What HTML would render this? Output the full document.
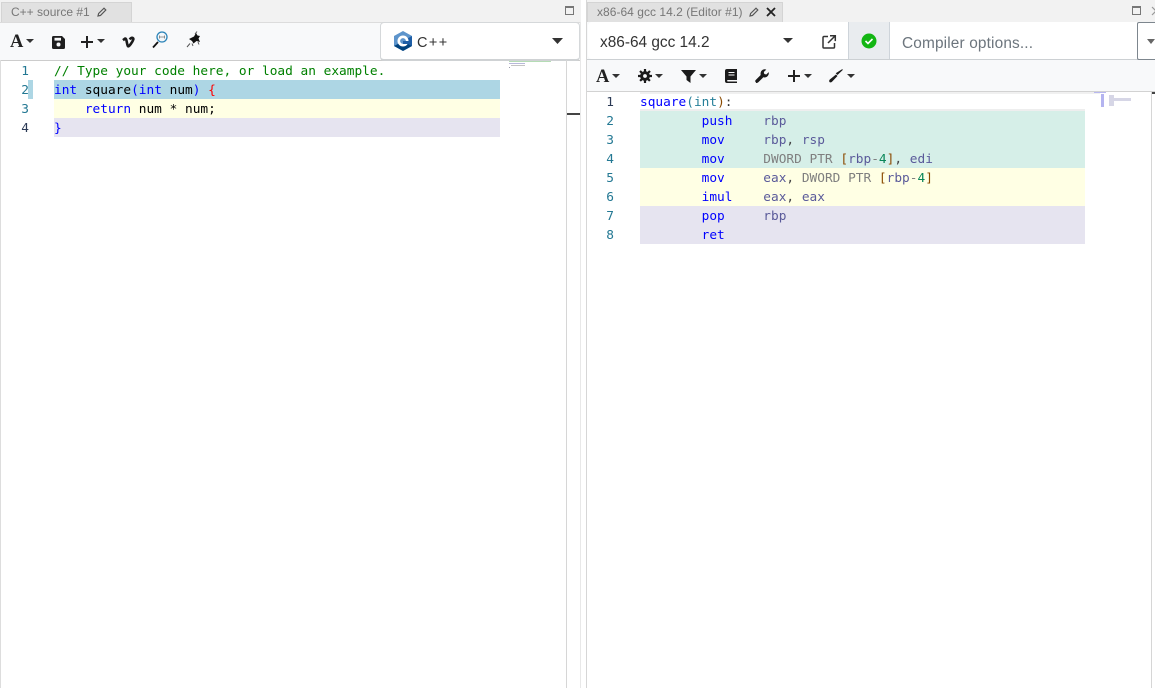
<!DOCTYPE html>
<html><head><meta charset="utf-8"><style>
html,body{margin:0;padding:0;background:#fff}
body{width:1155px;height:688px;overflow:hidden;position:relative;font-family:"Liberation Sans",sans-serif}
.a{position:absolute}
.t{position:absolute;white-space:pre;font-family:"DejaVu Sans Mono",monospace;font-size:12.8px;line-height:19px;height:19px;margin-top:1px}
.n{position:absolute;font-family:"DejaVu Sans Mono",monospace;font-size:12.8px;line-height:19px;color:#237893;text-align:right;width:20px;margin-top:1px}
.k{color:#0000ff}.c{color:#008000}.r{color:#5a5a9a}.g{color:#7f7f7f}.o{color:#098658}.y{color:#267f99}
svg{position:absolute;overflow:visible}
</style></head><body>
<!-- left pane -->
<div class="a" style="left:0;top:0;width:581px;height:22px;background:#f2f2f2"></div>
<div class="a" style="left:1px;top:2px;width:129px;height:20px;background:#e1e1e1;border:1px solid #d4d4d4;border-bottom:0;box-sizing:content-box;margin-right:0"></div>
<div class="a" style="left:11px;top:5px;font-size:12px;line-height:15px;color:#777;white-space:pre">C++ source #1</div>
<svg style="left:97px;top:7px" width="10" height="10" viewBox="0 0 10 10"><path d="M1 9l.6-2.500L7 1.200l1.800 1.800L3.500 8.400z" fill="none" stroke="#555" stroke-width="1.200"/></svg>
<svg style="left:565px;top:6px" width="9" height="9"><rect x=".5" y=".5" width="8" height="8" fill="none" stroke="#777"/><rect x="0" y="0" width="9" height="2" fill="#777"/></svg>
<div class="a" style="left:0;top:22px;width:581px;height:37px;background:#f8f9fa;border-top:1px solid #dcdcdc;border-bottom:1px solid #ccc"></div>
<div class="a" style="left:0;top:60px;width:1px;height:628px;background:#ddd"></div>
<div class="a" style="left:10px;top:31px;font:bold 18.500px 'Liberation Serif',serif;color:#222;line-height:22px">A</div>
<svg style="left:26px;top:39px" width="8" height="4"><path d="M0 0h8L4 4z" fill="#333"/></svg>
<svg style="left:52px;top:36px" width="13" height="13" viewBox="0 0 13 13"><path d="M1.500 0h8.500L13 3v8.500A1.500 1.500 0 0 1 11.500 13h-10A1.500 1.500 0 0 1 0 11.500v-10A1.500 1.500 0 0 1 1.500 0z" fill="#1f1f1f"/><rect x="2.500" y="1.800" width="6.500" height="2.800" fill="#f8f9fa"/><circle cx="6.500" cy="8.500" r="2" fill="#f8f9fa"/></svg>
<svg style="left:81px;top:36px" width="12" height="12"><path d="M5 0h2v5h5v2H7v5H5V7H0V5h5z" fill="#222"/></svg>
<svg style="left:97px;top:39px" width="8" height="4"><path d="M0 0h8L4 4z" fill="#333"/></svg>
<svg style="left:122px;top:36px" width="13" height="12" viewBox="0 0 13 12"><path d="M1 4.200L3 2.600C4.800 1.800 4.800 9 6 10.200C7 11 10.500 6 11.300 3.500C11.800 1.500 9.300 1 7.800 3.500" fill="none" stroke="#1b1b1b" stroke-width="2.600"/></svg>
<svg style="left:152px;top:31px" width="16" height="17" viewBox="0 0 16 17"><circle cx="10" cy="6" r="5" fill="#f4f8fb" stroke="#2c84b8" stroke-width="1.300"/><path d="M1 16.500l5-5.500" stroke="#111" stroke-width="1.800"/><path d="M7.500 6h5M7.500 4.500v3M12.500 4.500v3" stroke="#777" stroke-width=".8"/></svg>
<svg style="left:186px;top:31px" width="16" height="17" viewBox="0 0 16 17"><path d="M3 8l5-2.500L10 2l1.500 2.500L14 5l-1.500 2.500L14 11l-3.500-1-3 2.500-1.500-2.500z" fill="#111"/><path d="M9 3l2-2.500M1 16l3-3.500M6 12.500l1 2.500M12 11l1 2.500" stroke="#555" stroke-width="1"/></svg>
<div class="a" style="left:380px;top:22px;width:198px;height:36px;background:#fff;border:1px solid #d5d8da;border-bottom:2px solid #cfd2d4;border-radius:4px"></div>
<svg style="left:394px;top:31px" width="18" height="20" viewBox="0 0 18 20"><path d="M9 0l9 5v10l-9 5-9-5V5z" fill="#5d94cb"/><path d="M9 10l9 5-9 5-9-5 2-1z" fill="#00427e"/><path d="M18 5v10l-9-5z" fill="#1e5ea6"/><circle cx="9" cy="10" r="5.500" fill="#fff"/><circle cx="9" cy="10" r="2.900" fill="#5d94cb"/><path d="M9 10h7v3H9z" fill="#1e5ea6"/></svg>
<div class="a" style="left:417px;top:34px;font-size:14.500px;line-height:18px;color:#333;letter-spacing:1.400px">C++</div>
<svg style="left:552px;top:38px" width="11" height="6"><path d="M0 0h11L5.500 6z" fill="#333"/></svg>
<!-- left code -->
<div class="a" style="left:54px;top:80px;width:446px;height:19px;background:#add6e4"></div>
<div class="a" style="left:54px;top:99px;width:446px;height:19px;background:#ffffe4"></div>
<div class="a" style="left:54px;top:118px;width:446px;height:19px;background:#e6e4f0"></div>
<div class="a" style="left:28px;top:80px;width:5px;height:19px;background:#add6e4"></div>
<div class="n" style="left:9px;top:61px">1</div><div class="n" style="left:9px;top:80px;">2</div><div class="n" style="left:9px;top:99px">3</div><div class="n" style="left:9px;top:118px;color:#2b3a55">4</div>
<div class="t c" style="left:54px;top:61px">// Type your code here, or load an example.</div>
<div class="t" style="left:54px;top:80px;color:#000"><span class="k">int</span> square<span class="k">(</span><span class="k">int</span> num<span class="k">)</span> <span style="color:#f00">{</span></div>
<div class="t" style="left:54px;top:99px;color:#000">    <span class="k">return</span> num * num;</div>
<div class="t k" style="left:54px;top:118px">}</div>
<!-- left minimap -->
<div class="a" style="left:509px;top:61px;width:42px;height:1px;background:#b5dcb5"></div>
<div class="a" style="left:509px;top:63px;width:16px;height:1px;background:#b8b8da"></div>
<div class="a" style="left:511px;top:65px;width:14px;height:1px;background:#c4c4c4"></div>
<div class="a" style="left:509px;top:67px;width:1px;height:1px;background:#99a"></div>
<div class="a" style="left:566px;top:60px;width:1px;height:628px;background:#d6d6d6"></div>
<div class="a" style="left:567px;top:113px;width:13px;height:2px;background:#444"></div>
<div class="a" style="left:580px;top:22px;width:1px;height:666px;background:#e8e8e8"></div>
<div class="a" style="left:586px;top:0;width:1px;height:688px;background:#d6d6d6"></div>
<!-- right pane -->
<div class="a" style="left:587px;top:0;width:568px;height:22px;background:#f2f2f2"></div>
<div class="a" style="left:587px;top:2px;width:194px;height:20px;background:#e1e1e1;border:1px solid #d4d4d4;border-bottom:0"></div>
<div class="a" style="left:597px;top:5px;font-size:12px;line-height:15px;color:#777;white-space:pre;letter-spacing:.03px">x86-64 gcc 14.2 (Editor #1)</div>
<svg style="left:749px;top:7px" width="10" height="10" viewBox="0 0 10 10"><path d="M1 9l.6-2.500L7 1.200l1.800 1.800L3.500 8.400z" fill="none" stroke="#555" stroke-width="1.200"/></svg>
<svg style="left:766px;top:7px" width="10" height="10"><path d="M1 1l8 8M9 1L1 9" stroke="#222" stroke-width="1.800"/></svg>
<svg style="left:1132px;top:6px" width="9" height="9"><rect x=".5" y=".5" width="8" height="8" fill="none" stroke="#777"/><rect width="9" height="2" fill="#777"/></svg>
<div class="a" style="left:1151px;top:6px;width:4px;height:10px;overflow:hidden"><svg style="left:0;top:0" width="10" height="10"><path d="M1 1l8 8M9 1L1 9" stroke="#999" stroke-width="1.200"/></svg></div>
<div class="a" style="left:587px;top:22px;width:568px;height:37px;background:#f8f9fa;border-bottom:1px solid #ccd0d3"></div>
<div class="a" style="left:588px;top:22px;width:260px;height:37px;background:#fff;border-radius:4px 0 0 4px"></div>
<div class="a" style="left:600px;top:33px;font-size:15.400px;line-height:19px;color:#333;white-space:pre">x86-64 gcc 14.2</div>
<svg style="left:783px;top:38px" width="10" height="5"><path d="M0 0h10L5 5z" fill="#333"/></svg>
<svg style="left:822px;top:35px" width="14" height="14" viewBox="0 0 14 14"><path d="M6 1.500H2A1 1 0 0 0 1 2.500v9.500a1 1 0 0 0 1 1h9.500a1 1 0 0 0 1-1V8" fill="none" stroke="#333" stroke-width="1.500"/><path d="M8 .8h5.300v5.300M13 1L6 8" fill="none" stroke="#333" stroke-width="1.500"/></svg>
<div class="a" style="left:848px;top:22px;width:41px;height:37px;background:#e9ecef;border-left:1px solid #ced4da"></div>
<svg style="left:861px;top:33px" width="16" height="16"><circle cx="8" cy="8" r="7.500" fill="#13b613"/><path d="M4.500 8l2.500 2.500L11.500 6" fill="none" stroke="#fff" stroke-width="1.600"/></svg>
<div class="a" style="left:889px;top:22px;width:248px;height:37px;background:#fff;border-left:1px solid #ced4da"></div>
<div class="a" style="left:902px;top:34px;font-size:15.400px;line-height:19px;color:#6c757d;white-space:pre;letter-spacing:.15px">Compiler options...</div>
<div class="a" style="left:1137px;top:22px;width:18px;height:36px;background:#fff;border:1px solid #7d868e;border-right:0;border-radius:2px 0 0 2px"></div>
<svg style="left:1147px;top:39px" width="8" height="5"><path d="M0 0h8L4 5z" fill="#666"/></svg>
<div class="a" style="left:587px;top:60px;width:568px;height:31px;background:#f8f9fa;border-bottom:1px solid #d2d2d2"></div>
<div class="a" style="left:596px;top:66px;font:bold 18.500px 'Liberation Serif',serif;color:#222;line-height:22px">A</div>
<svg style="left:612px;top:74px" width="8" height="4"><path d="M0 0h8L4 4z" fill="#333"/></svg>
<svg style="left:638px;top:69px" width="14" height="14" viewBox="0 0 14 14"><circle cx="7" cy="7" r="3.400" fill="none" stroke="#1b1b1b" stroke-width="3"/><path d="M7 0v14M0 7h14M2 2l10 10M12 2L2 12" stroke="#1b1b1b" stroke-width="2.200" stroke-dasharray="2.500 9"/></svg>
<svg style="left:655px;top:74px" width="8" height="4"><path d="M0 0h8L4 4z" fill="#333"/></svg>
<svg style="left:681px;top:70px" width="15" height="13" viewBox="0 0 15 13"><path d="M0 0h15L9.500 6.500V13L5.500 10V6.500z" fill="#1b1b1b"/></svg>
<svg style="left:699px;top:74px" width="8" height="4"><path d="M0 0h8L4 4z" fill="#333"/></svg>
<svg style="left:725px;top:69px" width="12" height="14" viewBox="0 0 12 14"><path d="M2 0h10v11H2.500a1 1 0 0 0 0 1.500H12V14H2a2 2 0 0 1-2-2V2a2 2 0 0 1 2-2z" fill="#1b1b1b"/><path d="M3.500 3.500h6M3.500 6h6" stroke="#f8f9fa" stroke-width="1.100"/></svg>
<svg style="left:755px;top:69px" width="14" height="14" viewBox="0 0 14 14"><path d="M1 13.500c-1-1-1-1.800-.3-2.500l5-5C5 3.500 6.500.5 9.500.3c.7 0 1.300.1 1.800.3L8.800 3l.5 2 2 .5 2.400-2.400c.7 3.200-2 6-5.400 5.200l-5 5c-.7.700-1.700.700-2.300.700z" fill="#1b1b1b"/></svg>
<svg style="left:788px;top:70px" width="12" height="12"><path d="M5 0h2v5h5v2H7v5H5V7H0V5h5z" fill="#222"/></svg>
<svg style="left:804px;top:74px" width="8" height="4"><path d="M0 0h8L4 4z" fill="#333"/></svg>
<svg style="left:829px;top:69px" width="14" height="14" viewBox="0 0 14 14"><path d="M13.500.5l-5 4.800-1-1z" fill="#1b1b1b" stroke="#1b1b1b"/><path d="M7 5.500l1.500 1.500L3 12.800c-.8.800-2 .8-2.500.2s-.5-1.700.3-2.500z" fill="#1b1b1b"/></svg>
<svg style="left:847px;top:74px" width="8" height="4"><path d="M0 0h8L4 4z" fill="#333"/></svg>
<!-- right code -->
<div class="a" style="left:640px;top:92px;width:460px;height:2px;background:#f0f0f0"></div>
<div class="a" style="left:640px;top:109px;width:445px;height:2px;background:#eee"></div>
<div class="a" style="left:640px;top:111px;width:445px;height:57px;background:#d6efe8"></div>
<div class="a" style="left:640px;top:168px;width:445px;height:38px;background:#ffffe4"></div>
<div class="a" style="left:640px;top:206px;width:445px;height:38px;background:#e6e4f0"></div>
<div class="n" style="left:594px;top:92px;color:#2b3a55">1</div><div class="n" style="left:594px;top:111px">2</div><div class="n" style="left:594px;top:130px">3</div><div class="n" style="left:594px;top:149px">4</div><div class="n" style="left:594px;top:168px">5</div><div class="n" style="left:594px;top:187px">6</div><div class="n" style="left:594px;top:206px">7</div><div class="n" style="left:594px;top:225px">8</div>
<div class="t" style="left:640px;top:92px;color:#333"><span class="k">square</span><span class="y">(</span><span class="y">int</span><span style="color:#8a4a00">)</span>:</div>
<div class="t k" style="left:640px;top:111px">        push    <span class="r">rbp</span></div>
<div class="t k" style="left:640px;top:130px">        mov     <span class="r">rbp</span><span style="color:#444">,</span> <span class="r">rsp</span></div>
<div class="t k" style="left:640px;top:149px">        mov     <span class="g">DWORD PTR</span> <span style="color:#8a4a00">[</span><span class="r">rbp</span><span class="g">-</span><span class="o">4</span><span style="color:#8a4a00">]</span><span style="color:#444">,</span> <span class="r">edi</span></div>
<div class="t k" style="left:640px;top:168px">        mov     <span class="r">eax</span><span style="color:#444">,</span> <span class="g">DWORD PTR</span> <span style="color:#8a4a00">[</span><span class="r">rbp</span><span class="g">-</span><span class="o">4</span><span style="color:#8a4a00">]</span></div>
<div class="t k" style="left:640px;top:187px">        imul    <span class="r">eax</span><span style="color:#444">,</span> <span class="r">eax</span></div>
<div class="t k" style="left:640px;top:206px">        pop     <span class="r">rbp</span></div>
<div class="t k" style="left:640px;top:225px">        ret</div>
<!-- right minimap -->
<div class="a" style="left:1094px;top:92px;width:12px;height:1px;background:#b8b8f0"></div>
<div class="a" style="left:1101px;top:94px;width:3px;height:13px;background:#b4b4f0"></div>
<div class="a" style="left:1109px;top:95px;width:5px;height:11px;background:#d6d6e6"></div>
<div class="a" style="left:1114px;top:98px;width:17px;height:3px;background:#d6d6e6"></div>
<div class="a" style="left:1151px;top:92px;width:1px;height:596px;background:#d6d6d6"></div>
<div class="a" style="left:1152px;top:92px;width:3px;height:2px;background:#444"></div>
</body></html>
